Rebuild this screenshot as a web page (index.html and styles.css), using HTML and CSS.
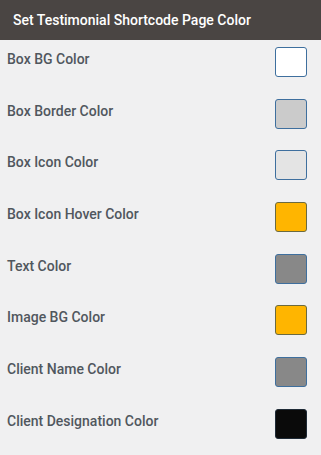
FILE: index.html
```html
<!DOCTYPE html>
<html lang="en">
<head>
	<meta charset="UTF-8">
	<title>Testimonial Colors</title>
	<link rel="stylesheet" href="styles.css">
</head>
<body>
	<div class="panel">
		<h2 class="panel-title">Set Testimonial Shortcode Page Color</h2>
		<ul class="color-list">
			<li><span class="label">Box BG Color</span><span class="swatch sw-white"></span></li>
			<li><span class="label">Box Border Color</span><span class="swatch sw-silver"></span></li>
			<li><span class="label">Box Icon Color</span><span class="swatch sw-light"></span></li>
			<li><span class="label">Box Icon Hover Color</span><span class="swatch sw-amber"></span></li>
			<li><span class="label">Text Color</span><span class="swatch sw-grey"></span></li>
			<li><span class="label">Image BG Color</span><span class="swatch sw-amber"></span></li>
			<li><span class="label">Client Name Color</span><span class="swatch sw-grey"></span></li>
			<li><span class="label">Client Designation Color</span><span class="swatch sw-black"></span></li>
		</ul>
	</div>
</body>
</html>
```

FILE: styles.css
```css
h2,li,ul,body{margin:0;padding:0}
ul{list-style:none}
body{font:14px/1.4 Roboto, "Liberation Sans", sans-serif;background:#f0f0f1;color:#50575e;}

.panel{
    width:321px;
    height:455px;
    background:#f0f0f1;
}
.panel-title{
    height:40px;
    line-height:40px;
    padding-left:13px;
    background:#4a4543;
    color:#fff;
    font-size:14px;
    font-weight:500;
}
.color-list{
    padding:7px 14px 0 7px;
}
.color-list li{
    display:flex;
    justify-content:space-between;
    align-items:flex-start;
    height:51.7px;
}
.label{
    font-weight:500;
    padding-top:3px;
}
.swatch{
    width:30px;
    height:28px;
    border:1px solid #3e6f9e;
    border-radius:3px;
}
.sw-white{background:#fff;}
.sw-silver{background:#cbcbcb;}
.sw-light{background:#e4e4e4;}
.sw-amber{background:#ffb500;border-color:#6b6a40;}
.sw-grey{background:#888;}
.sw-black{background:#0a0a0a;border-color:#1e2a36;}
```
